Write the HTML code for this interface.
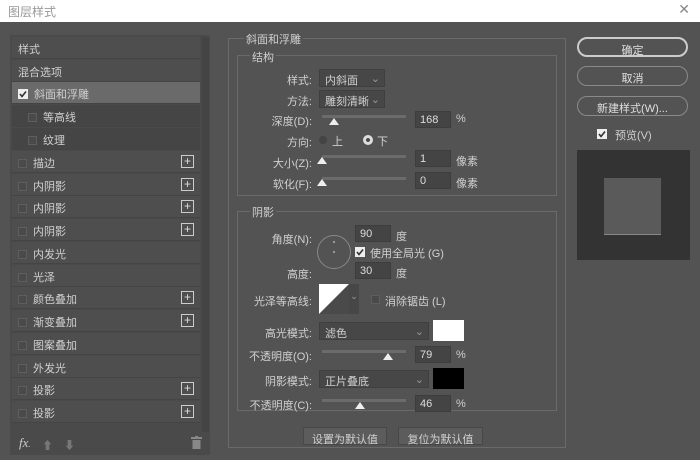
<!DOCTYPE html>
<html><head><meta charset="utf-8"><style>
*{margin:0;padding:0;box-sizing:border-box}
body{width:700px;height:460px;background:#535353;font-family:"Liberation Sans","Noto Sans CJK SC",sans-serif;font-size:11px;color:#d0d0d0;position:relative;overflow:hidden}
.a{position:absolute}
.title{left:0;top:0;width:700px;height:22px;background:#fff;color:#999;font-size:12px;padding:3px 0 0 8px}
.list{left:10px;top:35px;width:200px;height:420px;background:#4a4a4a}
.row{position:absolute;left:2px;width:188px;height:22px;background:#4e4e4e;border-bottom:1px solid #444;padding:4px 0 0 6px;white-space:nowrap}
.cb{display:inline-block;width:9px;height:9px;background:#4a4a4a;border:1px solid #5e5e5e;vertical-align:-1px;margin-right:6px}
.plus{position:absolute;right:6px;top:4px;width:13px;height:13px;border:1px solid #ccc;color:#ddd;font-size:12px;line-height:10px;text-align:center}
.box{border:1px solid #6a6a6a}
.lbl{text-align:right;width:80px}
.in{background:#444;border:1px solid #3d3d3d;height:17px;padding:2px 4px;color:#ddd}
.sel{background:#474747;border:1px solid #3f3f3f;height:18px;padding:2px 5px}
.sl{height:3px;background:#6b6b6b}
.tri{width:0;height:0;border-left:5px solid transparent;border-right:5px solid transparent;border-bottom:7px solid #eee}
.btn{border:1px solid #8a8a8a;border-radius:10px;text-align:center;padding-top:3px;color:#e0e0e0}
.bb{background:#5c5c5c;border:1px solid #474747;text-align:center;padding-top:3px}
.ck{display:inline-block;width:10px;height:10px;vertical-align:-1px}
</style></head><body>
<div class="a title">图层样式<span style="position:absolute;right:10px;top:1px;font-size:14px;color:#888">✕</span></div>

<div class="a list">
<div class="row" style="top:2px;padding-left:6px">样式</div>
<div class="row" style="top:25px">混合选项</div>
<div class="row" style="top:47px;background:#6a6a6a"><svg class="ck" style="margin-right:6px" viewBox="0 0 10 10"><rect width="10" height="10" fill="#eee"/><path d="M2 5 L4 7.5 L8 2.5" stroke="#333" stroke-width="1.6" fill="none"/></svg>斜面和浮雕</div>
<div class="row" style="top:70px;background:#454545;padding-left:16px"><span class="cb"></span>等高线</div>
<div class="row" style="top:93px;background:#454545;padding-left:16px"><span class="cb"></span>纹理</div>
<div class="row" style="top:116px"><span class="cb"></span>描边<span class="plus">+</span></div>
<div class="row" style="top:139px"><span class="cb"></span>内阴影<span class="plus">+</span></div>
<div class="row" style="top:161px"><span class="cb"></span>内阴影<span class="plus">+</span></div>
<div class="row" style="top:184px"><span class="cb"></span>内阴影<span class="plus">+</span></div>
<div class="row" style="top:207px"><span class="cb"></span>内发光</div>
<div class="row" style="top:230px"><span class="cb"></span>光泽</div>
<div class="row" style="top:252px"><span class="cb"></span>颜色叠加<span class="plus">+</span></div>
<div class="row" style="top:275px"><span class="cb"></span>渐变叠加<span class="plus">+</span></div>
<div class="row" style="top:298px"><span class="cb"></span>图案叠加</div>
<div class="row" style="top:321px"><span class="cb"></span>外发光</div>
<div class="row" style="top:343px"><span class="cb"></span>投影<span class="plus">+</span></div>
<div class="row" style="top:366px"><span class="cb"></span>投影<span class="plus">+</span></div>
<div class="a" style="left:192px;top:2px;width:7px;height:395px;background:#444"></div>
<div class="a" style="left:9px;top:400px;font-style:italic;font-family:'Liberation Serif',serif;font-size:13px;color:#ccc">fx<span style="font-size:8px">.</span></div>
<div class="a" style="left:32px;top:402px;color:#777">⬆</div>
<div class="a" style="left:54px;top:402px;color:#777">⬇</div>
<svg class="a" style="left:181px;top:401px" width="11" height="13" viewBox="0 0 11 13"><rect x="0" y="1" width="11" height="2" fill="#888"/><rect x="4" y="0" width="3" height="2" fill="#888"/><rect x="1.5" y="4" width="8" height="9" fill="#888"/></svg>
</div>

<div class="a box" style="left:228px;top:38px;width:338px;height:410px"></div>
<div class="a" style="left:244px;top:31px;background:#535353;padding:0 2px">斜面和浮雕</div>
<div class="a box" style="left:237px;top:55px;width:320px;height:141px"></div>
<div class="a" style="left:250px;top:49px;background:#535353;padding:0 2px">结构</div>

<div class="a lbl" style="left:232px;top:72px">样式:</div>
<div class="a sel" style="left:319px;top:69px;width:66px">内斜面<span style="position:absolute;right:4px;color:#999">⌄</span></div>
<div class="a lbl" style="left:232px;top:93px">方法:</div>
<div class="a sel" style="left:319px;top:90px;width:66px">雕刻清晰<span style="position:absolute;right:4px;color:#999">⌄</span></div>
<div class="a lbl" style="left:232px;top:113px">深度(D):</div>
<div class="a sl" style="left:322px;top:115px;width:84px"></div>
<div class="a tri" style="left:329px;top:118px"></div>
<div class="a in" style="left:415px;top:111px;width:36px">168</div>
<div class="a" style="left:456px;top:113px">%</div>
<div class="a lbl" style="left:232px;top:134px">方向:</div>
<div class="a" style="left:319px;top:136px;width:8px;height:8px;border-radius:50%;background:#444"></div>
<div class="a" style="left:332px;top:133px">上</div>
<div class="a" style="left:363px;top:135px;width:10px;height:10px;border-radius:50%;background:#ddd;border:3px solid #ddd;box-shadow:inset 0 0 0 2px #444"></div>
<div class="a" style="left:377px;top:133px">下</div>
<div class="a lbl" style="left:232px;top:155px">大小(Z):</div>
<div class="a sl" style="left:322px;top:155px;width:84px"></div>
<div class="a tri" style="left:317px;top:157px"></div>
<div class="a in" style="left:415px;top:150px;width:36px">1</div>
<div class="a" style="left:456px;top:153px">像素</div>
<div class="a lbl" style="left:232px;top:176px">软化(F):</div>
<div class="a sl" style="left:322px;top:177px;width:84px"></div>
<div class="a tri" style="left:317px;top:179px"></div>
<div class="a in" style="left:415px;top:172px;width:36px">0</div>
<div class="a" style="left:456px;top:175px">像素</div>

<div class="a box" style="left:237px;top:211px;width:320px;height:200px"></div>
<div class="a" style="left:250px;top:204px;background:#535353;padding:0 2px">阴影</div>
<div class="a lbl" style="left:232px;top:231px">角度(N):</div>
<div class="a" style="left:317px;top:235px;width:34px;height:34px;border-radius:50%;border:1px solid #888"></div>
<div class="a" style="left:333px;top:241px;width:2px;height:2px;background:#999"></div>
<div class="a" style="left:333px;top:251px;width:2px;height:2px;background:#999"></div>
<div class="a in" style="left:355px;top:225px;width:36px">90</div>
<div class="a" style="left:396px;top:228px">度</div>
<svg class="a" style="left:355px;top:247px" width="10" height="10" viewBox="0 0 10 10"><rect width="10" height="10" fill="#eee"/><path d="M2 5 L4 7.5 L8 2.5" stroke="#333" stroke-width="1.6" fill="none"/></svg>
<div class="a" style="left:370px;top:245px">使用全局光 (G)</div>
<div class="a lbl" style="left:232px;top:266px">高度:</div>
<div class="a in" style="left:355px;top:262px;width:36px">30</div>
<div class="a" style="left:396px;top:265px">度</div>
<div class="a lbl" style="left:232px;top:293px">光泽等高线:</div>
<svg class="a" style="left:319px;top:284px" width="30" height="30"><rect width="30" height="30" fill="#4a4a4a"/><polygon points="0,0 30,0 0,30" fill="#fff"/></svg>
<div class="a" style="left:349px;top:284px;width:10px;height:30px;background:#474747;color:#999;font-size:9px;text-align:center;padding-top:7px">⌄</div>
<div class="a" style="left:371px;top:295px;width:9px;height:9px;background:#4a4a4a;border:1px solid #5e5e5e"></div>
<div class="a" style="left:385px;top:293px">消除锯齿 (L)</div>
<div class="a lbl" style="left:232px;top:325px">高光模式:</div>
<div class="a sel" style="left:319px;top:322px;width:110px">滤色<span style="position:absolute;right:4px;color:#999">⌄</span></div>
<div class="a" style="left:433px;top:320px;width:31px;height:21px;background:#fff"></div>
<div class="a lbl" style="left:232px;top:348px">不透明度(O):</div>
<div class="a sl" style="left:322px;top:350px;width:84px"></div>
<div class="a tri" style="left:383px;top:353px"></div>
<div class="a in" style="left:415px;top:346px;width:36px">79</div>
<div class="a" style="left:456px;top:349px">%</div>
<div class="a lbl" style="left:232px;top:373px">阴影模式:</div>
<div class="a sel" style="left:319px;top:370px;width:110px">正片叠底<span style="position:absolute;right:4px;color:#999">⌄</span></div>
<div class="a" style="left:433px;top:368px;width:31px;height:21px;background:#000"></div>
<div class="a lbl" style="left:232px;top:397px">不透明度(C):</div>
<div class="a sl" style="left:322px;top:399px;width:84px"></div>
<div class="a tri" style="left:355px;top:402px"></div>
<div class="a in" style="left:415px;top:395px;width:36px">46</div>
<div class="a" style="left:456px;top:398px">%</div>

<div class="a bb" style="left:303px;top:427px;width:84px;height:18px">设置为默认值</div>
<div class="a bb" style="left:398px;top:427px;width:85px;height:18px">复位为默认值</div>

<div class="a btn" style="left:577px;top:37px;width:111px;height:20px;border-color:#ccc;border-width:2px">确定</div>
<div class="a btn" style="left:577px;top:66px;width:111px;height:20px">取消</div>
<div class="a btn" style="left:577px;top:96px;width:111px;height:20px">新建样式(W)...</div>
<svg class="a" style="left:597px;top:129px" width="10" height="10" viewBox="0 0 10 10"><rect width="10" height="10" fill="#eee"/><path d="M2 5 L4 7.5 L8 2.5" stroke="#333" stroke-width="1.6" fill="none"/></svg>
<div class="a" style="left:615px;top:127px">预览(V)</div>
<div class="a" style="left:577px;top:150px;width:113px;height:110px;background:#333"></div>
<div class="a" style="left:604px;top:178px;width:57px;height:57px;background:#5a5a5a;border-bottom:1px solid #888"></div>
</body></html>
